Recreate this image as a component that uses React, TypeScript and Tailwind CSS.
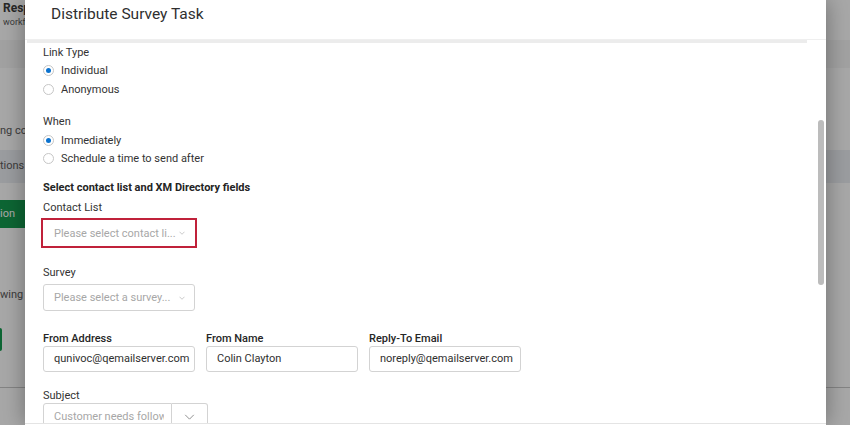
import React from "react";

const font = { fontFamily: "Roboto, 'Liberation Sans', Arial, sans-serif" };

function Chevron({ className }: { className?: string }) {
  return (
    <svg viewBox="0 0 12 7" className={className} fill="none" stroke="currentColor" strokeWidth="1.1">
      <polyline points="1,1 6,6 11,1" />
    </svg>
  );
}

function Radio({ checked, label }: { checked?: boolean; label: string }) {
  return (
    <div className="flex h-[18px] items-center gap-[7px]">
      <span className="flex h-[11px] w-[11px] items-center justify-center rounded-full border border-[#c6c6c6] bg-white">
        {checked && <span className="h-[5px] w-[5px] rounded-full bg-[#0a72cf]" />}
      </span>
      <span className="pt-[1px]">{label}</span>
    </div>
  );
}

function TextInput({ value }: { value: string }) {
  return (
    <div className="flex h-[26px] w-[152px] items-center overflow-hidden whitespace-nowrap rounded-[3px] border border-[#d3d3d3] pl-[10px] text-[#2f2f2f]">
      {value}
    </div>
  );
}

export default function App() {
  return (
    <div className="relative h-[425px] w-[850px] overflow-hidden bg-white" style={font}>
      {/* page behind the dialog */}
      <div className="flex h-full flex-col">
        <div className="pl-[3px] pt-[1px]">
          <div className="text-[12px] font-bold leading-[14px] text-[#3c3c3c]">Response Workflows</div>
          <div className="mt-[1px] text-[9px] leading-[12px] text-[#5a5a5a]">workflows for this project</div>
        </div>
        <div className="mt-[12px] h-[28px] bg-[#f6f6f6]" />
        <div className="mt-[56px] text-[11px] leading-[14px] text-[#5c5c5c]">ng conditions are met</div>
        <div className="mt-[12px] flex h-[33px] items-center bg-[#eceef3] text-[11px] text-[#5c5c5c]">tions setup</div>
        <div className="mt-[17px] flex h-[28px] w-[300px] items-center rounded-r-[3px] bg-[#159b50] text-[11px] text-white">ion</div>
        <div className="mt-[60px] text-[11px] leading-[14px] text-[#5c5c5c]">wing tasks</div>
        <div className="mt-[26px] h-[23px] w-[2px] rounded-r-[2px] bg-[#159b50]" />
        <div className="mt-[36px] border-t border-[#c9c9c9]" />
      </div>

      {/* backdrop */}
      <div className="absolute inset-0 bg-black/[0.34]" />

      {/* dialog */}
      <div className="absolute bottom-0 left-[25px] top-0 flex w-[801px] flex-col bg-white shadow-[0_0_22px_rgba(0,0,0,0.35)]">
        <div className="h-[40px] shrink-0 border-b border-[#efefef] pl-[26px] pt-[4px] text-[15.5px] leading-[20px] text-[#2f2f2f]">
          Distribute Survey Task
        </div>

        <div className="flex min-h-0 flex-1 overflow-hidden">
          <div className="ml-[2px] flex min-w-0 flex-1 flex-col">
            <div className="h-[3px] shrink-0 bg-[#ececec]" />
            <div className="flex flex-col pl-[16px] text-[11px] leading-[16px] text-[#333]">
              <div className="mt-[2px]">Link Type</div>
              <div className="flex flex-col gap-[1px]">
                <Radio checked label="Individual" />
                <Radio label="Anonymous" />
              </div>

              <div className="mt-[16px]">When</div>
              <div className="mt-[1px] flex flex-col">
                <Radio checked label="Immediately" />
                <Radio label="Schedule a time to send after" />
              </div>

              <div className="mt-[13px] font-bold text-[#242424]">Select contact list and XM Directory fields</div>

              <div className="mt-[4px]">Contact List</div>
              <div className="-ml-[2px] mt-[2px] flex h-[30px] w-[156px] items-center justify-between border-2 border-[#c0213a] pl-[11px] pr-[10px] text-[#a7a7a7]">
                <span className="pt-[1px]">Please select contact li...</span>
                <Chevron className="h-[4px] w-[6px] text-[#a0a0a0]" />
              </div>

              <div className="mt-[17px]">Survey</div>
              <div className="mt-[3px] flex h-[27px] w-[152px] items-center justify-between rounded-[3px] border border-[#d3d3d3] pl-[10px] pr-[9px] text-[#a7a7a7]">
                <span className="pt-[1px]">Please select a survey...</span>
                <Chevron className="h-[4px] w-[6px] text-[#a0a0a0]" />
              </div>

              <div className="mt-[21px] flex gap-[11px]">
                <div className="flex flex-col">
                  <div className="font-medium leading-[14px] text-[#262626]">From Address</div>
                  <TextInput value="qunivoc@qemailserver.com" />
                </div>
                <div className="flex flex-col">
                  <div className="font-medium leading-[14px] text-[#262626]">From Name</div>
                  <TextInput value="Colin Clayton" />
                </div>
                <div className="flex flex-col">
                  <div className="font-medium leading-[14px] text-[#262626]">Reply-To Email</div>
                  <TextInput value="noreply@qemailserver.com" />
                </div>
              </div>

              <div className="mt-[16px]">Subject</div>
              <div className="-mt-[1px] flex h-[27px] w-[165px] shrink-0">
                <div className="flex w-[130px] items-center rounded-l-[3px] border border-[#d3d3d3] pl-[10px] text-[#a7a7a7]">
                  <span className="w-[110px] overflow-hidden whitespace-nowrap">Customer needs follow up</span>
                </div>
                <div className="flex w-[36px] items-center justify-center rounded-r-[3px] border border-l-0 border-[#d3d3d3]">
                  <Chevron className="h-[6px] w-[11px] text-[#8a8a8a]" />
                </div>
              </div>
            </div>
          </div>

          <div className="w-[19px] shrink-0 pl-[11px] pr-[2px]">
            <div className="mt-[80px] h-[165px] w-[6px] rounded-full bg-[#bcbcbc]" />
          </div>
        </div>

        <div className="h-[2px] shrink-0 border-t border-[#e4e4e4]" />
      </div>
    </div>
  );
}
